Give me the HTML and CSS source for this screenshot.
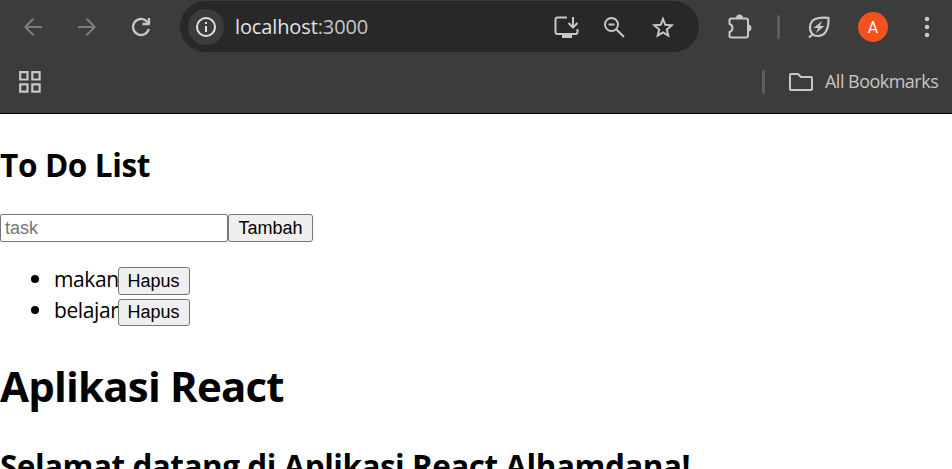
FILE: index.html
```html
<!DOCTYPE html>
<html lang="id">
<head>
<meta charset="utf-8">
<title>Aplikasi React</title>
<link rel="stylesheet" href="styles.css">
</head>
<body>
<header class="chrome">
  <div class="toolbar">
    <div class="nav">
      <svg class="dim" width="22" height="22" viewBox="0 0 22 22"><path d="M20 11H3.500M11.500 2.800L3.300 11l8.200 8.200"/></svg>
      <svg class="dim" width="22" height="22" viewBox="0 0 22 22"><path d="M2 11h16.500M10.500 2.800l8.200 8.200-8.200 8.200"/></svg>
      <svg width="22" height="22" viewBox="0 0 22 22"><path stroke-width="2.300" d="M18.800 13A8 8 0 1 1 16.700 5.300L19 7.600M19 2v6h-6.500"/></svg>
    </div>
    <div class="omnibox">
      <span class="info"><svg width="22" height="22" viewBox="0 0 22 22"><circle cx="11" cy="11" r="9"/><path d="M11 10v6M11 6v2"/></svg></span>
      <span class="url">localhost<span class="port">:3000</span></span>
      <svg class="install" width="26" height="24" viewBox="0 0 26 24"><path d="M14 2.500H4.500Q2.500 2.500 2.500 4.500v12.500q0 2 2 2h18q2 0 2-2v-3M20 2v10M15.500 8l4.500 4.500 4.500-4.500"/><path class="solid" d="M9 19h10v4H9z"/></svg>
      <svg class="lens" width="24" height="24" viewBox="0 0 24 24"><circle cx="9.500" cy="9.500" r="6.500"/><path d="M14.500 14.500L22 22M6.500 9.500h6"/></svg>
      <svg class="star" width="24" height="24" viewBox="0 0 24 24"><path stroke-linejoin="miter" d="M12 4l2.300 5.800 6.400.500-4.900 4.200 1.500 6.200L12 17.400l-5.300 3.300 1.500-6.200-4.900-4.200 6.400-.500z"/></svg>
    </div>
    <svg class="puzzle" width="26" height="26" viewBox="0 0 26 26"><path d="M4 4.500h15q2 0 2 2v15q0 2-2 2H4q-1.500 0-1.500-1.500v-4q3-1 3-4t-3-4V6q0-1.500 1.500-1.500z"/><path class="solid" d="M9 4a3.500 3.500 0 0 1 7 0zM21 10.500a3.500 3.500 0 0 1 0 7z"/></svg>
    <i class="divider"></i>
    <svg class="leaf" width="24" height="24" viewBox="0 0 24 24"><path stroke-width="2.200" d="M2 22.500l4.500-4M21.500 2.800C10 1.800 3.500 4 3 12c-.200 6 3 9 8 9C19 21 22 12.500 21.500 2.800z"/><path class="solid" d="M15 6l-8.500 7H11l-2 5 8.500-7H13z"/></svg>
    <span class="avatar">A</span>
    <svg class="more" width="6" height="24" viewBox="0 0 6 24"><g class="solid"><circle cx="3" cy="4" r="2.300"/><circle cx="3" cy="12" r="2.300"/><circle cx="3" cy="20" r="2.300"/></g></svg>
  </div>
  <div class="bookmarks">
    <svg width="22" height="22" viewBox="0 0 22 22"><path stroke-width="2.200" stroke-linejoin="miter" d="M1.200 1.200h7.300v7.300H1.200zM13.300 1.200h7.300v7.300h-7.300zM1.200 13.300h7.300v7.300H1.200zM13.300 13.300h7.300v7.300h-7.300z"/></svg>
    <i class="divider"></i>
    <svg class="folder" width="24" height="20" viewBox="0 0 24 20"><path d="M2.500 2h6.500l3 3h10q1 0 1 1v11q0 1-1 1H2q-1 0-1-1V3q0-1 1-1z"/></svg>
    <span class="all">All Bookmarks</span>
  </div>
</header>
<main>
  <h2 class="todo">To Do List</h2>
  <form class="entry"><input type="text" placeholder="task"><button type="button">Tambah</button></form>
  <ul>
    <li><span>makan</span><button>Hapus</button></li>
    <li><span>belajar</span><button>Hapus</button></li>
  </ul>
  <h1>Aplikasi React</h1>
  <h2 class="welcome">Selamat datang di Aplikasi React Alhamdana!</h2>
</main>
</body>
</html>
```
FILE: styles.css
```css
* { box-sizing: border-box; }
body { margin: 0; height: 469px; overflow: hidden; background: #fff; color: #000; font-family: "Open Sans", "Noto Sans", sans-serif; }
.chrome { height: 114px; background: #3c3c3c; border-bottom: 1px solid #000; }
svg { display: block; flex: none; fill: none; stroke: #c7c7c7; stroke-width: 2; stroke-linejoin: round; }
.solid { fill: #c7c7c7; stroke: none; }
.dim { stroke: #7d7d7d; }
.toolbar { display: flex; align-items: center; height: 54px; }
.nav { display: flex; gap: 32px; width: 180px; padding-left: 22px; }
.omnibox { display: flex; align-items: center; width: 519px; height: 51px; border-radius: 26px; margin-top: -1px; padding-left: 8px; background: #282828; }
.info { display: flex; align-items: center; justify-content: center; width: 36px; height: 36px; border-radius: 50%; background: #3c3c3c; }
.info svg { stroke: #e3e3e3; }
.url { width: 330px; margin-left: 11px; font-size: 20px; letter-spacing: -.12px; line-height: 28px; color: #e3e3e3; white-space: nowrap; }
.port { color: #c7c7c7; }
.install { margin-left: -12px; }
.lens { margin-left: 23px; }
.star { margin-left: 25px; }
.puzzle { margin-left: 28px; }
.divider { width: 3px; height: 24px; border-radius: 2px; background: #5e5e5e; }
.toolbar .divider { margin-left: 24px; }
.leaf { margin-left: 27px; }
.avatar { width: 30px; height: 30px; margin-left: 27px; border-radius: 50%; background: #f4511e; color: #fff; font: 16px/31px Roboto, sans-serif; text-align: center; }
.more { margin-left: 36px; }
.bookmarks { display: flex; align-items: center; height: 56px; padding-left: 19px; }
.bookmarks .divider { margin-left: 721px; }
.folder { margin-left: 24px; }
.all { margin: -2px 0 0 12px; font-size: 18px; letter-spacing: -.52px; line-height: 24px; color: #c7c7c7; white-space: nowrap; }
main { padding-top: 29px; }
h1, h2 { margin: 0; font-weight: 700; white-space: nowrap; }
h2 { font-size: 31.500px; line-height: 44px; letter-spacing: -.5px; }
.todo { letter-spacing: -.35px; }
.entry { display: flex; height: 28px; margin-top: 27px; }
input, button { border: 1px solid #767676; border-radius: 3px; font: 18px "Liberation Sans", Arial, sans-serif; }
input { width: 228px; height: 28px; padding: 1px 4px; border-radius: 2px; }
input::placeholder { color: #757575; }
button { height: 28px; padding: 0; background: #efefef; color: #000; }
.entry button { width: 85px; }
ul { margin: 21px 0 0; padding: 0 0 0 54px; font-size: 21px; line-height: 31px; }
li { height: 31px; }
li::marker { font-size: 23px; }
li span { display: inline-block; width: 64px; white-space: nowrap; letter-spacing: -.4px; }
li button { width: 72px; padding-right: 1px; vertical-align: middle; }
li + li button { height: 27px; }
h1 { margin-top: 32px; font-size: 42px; line-height: 58px; letter-spacing: -.8px; }
.welcome { margin-top: 29px; }
```
